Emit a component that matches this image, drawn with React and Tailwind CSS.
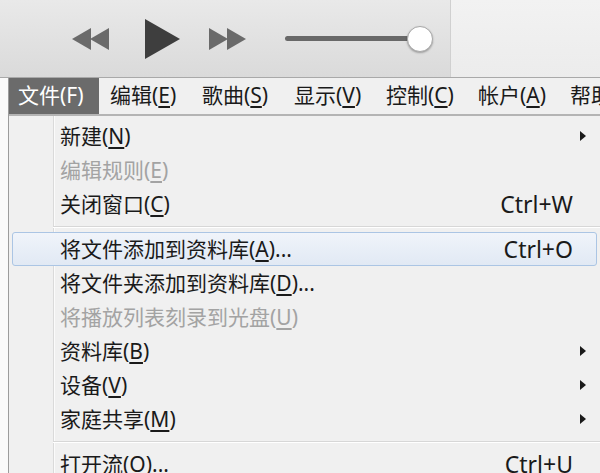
import React from "react";

const items = [
  { label: "新建", key: "N", arrow: true },
  { label: "编辑规则", key: "E", disabled: true },
  { label: "关闭窗口", key: "C", shortcut: "Ctrl+W" },
  { sep: true },
  { label: "将文件添加到资料库", key: "A", dots: true, shortcut: "Ctrl+O", active: true },
  { label: "将文件夹添加到资料库", key: "D", dots: true },
  { label: "将播放列表刻录到光盘", key: "U", disabled: true },
  { label: "资料库", key: "B", arrow: true },
  { label: "设备", key: "V", arrow: true },
  { label: "家庭共享", key: "M", arrow: true },
  { sep: true },
  { label: "打开流", key: "O", dots: true, shortcut: "Ctrl+U" },
];

const menus = [
  ["文件", "F"],
  ["编辑", "E"],
  ["歌曲", "S"],
  ["显示", "V"],
  ["控制", "C"],
  ["帐户", "A"],
  ["帮助", "H"],
];

function Arrow() {
  return (
    <svg width="6" height="10" viewBox="0 0 6 10">
      <path d="M0 0 L6 5 L0 10 Z" fill="#1a1a1a" />
    </svg>
  );
}

function Row({ item }) {
  if (item.sep) {
    return (
      <div className="h-[11px] shrink-0 flex items-center pl-[44px]">
        <div className="w-full border-t border-[#d7d7d7] border-b border-b-white" />
      </div>
    );
  }
  const color = item.disabled ? "text-[#a3a3a3]" : "text-[#1a1a1a]";
  const box = item.active
    ? "mx-[3px] border border-[#abc5e4] rounded-[3px] bg-[linear-gradient(to_bottom,#f0f4fa,#e1e9f4)] pl-[47px]"
    : "pl-[51px]";
  return (
    <div className={`flex shrink-0 items-center h-[34px] leading-none ${box} ${color}`}>
      <span className="flex-1 whitespace-nowrap">
        {item.label}(<span className="underline underline-offset-[3px]">{item.key}</span>){item.dots ? "..." : ""}
      </span>
      {item.shortcut && <span className="whitespace-nowrap text-[23px]">{item.shortcut}</span>}
      <span className={`flex items-center ${item.active ? "w-[23px]" : "w-[27px]"} pl-[7px]`}>
        {item.arrow && <Arrow />}
      </span>
    </div>
  );
}

export default function App() {
  return (
    <div className="w-[600px] h-[473px] overflow-hidden bg-white font-['Noto_Sans','Noto_Sans_CJK_SC',sans-serif] text-[21px]">
      {/* toolbar */}
      <div className="flex h-[78px] border-b border-[#a9a9a9]">
        <div className="w-[451px] bg-[linear-gradient(to_bottom,#e9e9e9,#dadada)] border-r border-[#d0d0d0] flex items-center pl-[72px]">
          <svg width="38" height="22" viewBox="0 0 38 22">
            <path d="M0 11 L19 0 L19 22 Z" fill="#6a6a6a" />
            <path d="M18 11 L37 0 L37 22 Z" fill="#6a6a6a" />
          </svg>
          <svg className="ml-[35px]" width="35" height="40" viewBox="0 0 35 40">
            <path d="M0 0 L35 20 L0 40 Z" fill="#3e3e3e" />
          </svg>
          <svg className="ml-[29px]" width="38" height="22" viewBox="0 0 38 22">
            <path d="M0 0 L19 11 L0 22 Z" fill="#6a6a6a" />
            <path d="M18 0 L37 11 L18 22 Z" fill="#6a6a6a" />
          </svg>
          <div className="ml-[38px] flex items-center">
            <div className="w-[124px] h-[5px] rounded-full bg-[#686868]" />
            <div className="w-[26px] h-[26px] -ml-[2px] rounded-full bg-white border border-[#a8a8a8] shadow-[0_1px_2px_rgba(0,0,0,0.3)]" />
          </div>
        </div>
        <div className="flex-1 bg-[linear-gradient(to_bottom,#f2f2f2,#ececec)]" />
      </div>

      <div className="flex h-[395px]">
        <div className="w-[8px] bg-[#fafafa]" />
        <div className="flex-1 border-l border-[#9c9c9c] bg-[#f0f0f0] flex flex-col overflow-hidden">
          {/* menubar */}
          <div className="h-[38px] shrink-0 flex items-stretch border-b-2 border-[#b4b4b4] whitespace-nowrap">
            {menus.map(([t, k], i) => (
              <div
                key={t}
                className={`shrink-0 flex items-center pl-[9px] ${i === 0 ? "w-[90px] mr-[2px] bg-[#6b6b6b] text-white" : "w-[92px] text-[#1a1a1a]"}`}
              >
                {t}(<span className={i === 0 ? "" : "underline underline-offset-[3px]"}>{k}</span>)
              </div>
            ))}
          </div>
          {/* dropdown */}
          <div className="flex-1 flex flex-col pt-[3px] bg-[linear-gradient(to_right,#f0f0f0_44px,#dadada_44px,#dadada_45px,#fbfbfb_45px,#fbfbfb_46px,#f0f0f0_46px)]">
            {items.map((it, i) => (
              <Row key={i} item={it} />
            ))}
          </div>
        </div>
      </div>
    </div>
  );
}
